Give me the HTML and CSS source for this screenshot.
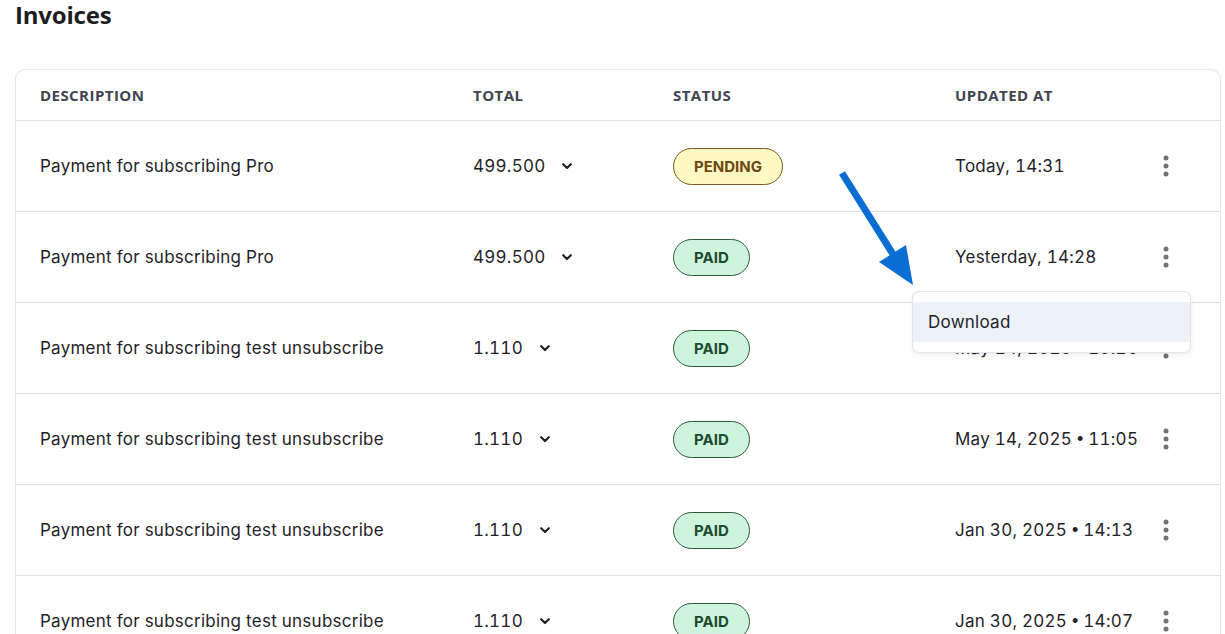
FILE: index.html
```html
<!DOCTYPE html>
<html>
<head>
<meta charset="utf-8">
<link rel="stylesheet" href="styles.css">
</head>
<body>
<div class="page">
  <h1 class="title">Invoices</h1>
  <div class="card">
    <div class="row head">
      <div class="cell">DESCRIPTION</div>
      <div class="cell">TOTAL</div>
      <div class="cell">STATUS</div>
      <div class="cell">UPDATED AT</div>
      <div class="cell"></div>
    </div>

    <div class="row">
      <div class="cell">Payment for subscribing Pro</div>
      <div class="cell total">499.500 <svg class="chev" viewBox="0 0 10 7"><polyline points="1.2,1.2 5,5 8.8,1.2"/></svg></div>
      <div class="cell"><span class="badge pending">PENDING</span></div>
      <div class="cell">Today, 14:31</div>
      <div class="cell kebab-cell"><svg class="kebab" viewBox="0 0 6 22"><circle cx="3" cy="3" r="2.5"/><circle cx="3" cy="11" r="2.5"/><circle cx="3" cy="19" r="2.5"/></svg></div>
    </div>

    <div class="row">
      <div class="cell">Payment for subscribing Pro</div>
      <div class="cell total">499.500 <svg class="chev" viewBox="0 0 10 7"><polyline points="1.2,1.2 5,5 8.8,1.2"/></svg></div>
      <div class="cell"><span class="badge paid">PAID</span></div>
      <div class="cell">Yesterday, 14:28</div>
      <div class="cell kebab-cell"><svg class="kebab" viewBox="0 0 6 22"><circle cx="3" cy="3" r="2.5"/><circle cx="3" cy="11" r="2.5"/><circle cx="3" cy="19" r="2.5"/></svg></div>
    </div>

    <div class="row">
      <div class="cell">Payment for subscribing test unsubscribe</div>
      <div class="cell total">1.110 <svg class="chev" viewBox="0 0 10 7"><polyline points="1.2,1.2 5,5 8.8,1.2"/></svg></div>
      <div class="cell"><span class="badge paid">PAID</span></div>
      <div class="cell">May 14, 2025 <span class="sep">•</span> 15:26</div>
      <div class="cell kebab-cell"><svg class="kebab" viewBox="0 0 6 22"><circle cx="3" cy="3" r="2.5"/><circle cx="3" cy="11" r="2.5"/><circle cx="3" cy="19" r="2.5"/></svg></div>
    </div>

    <div class="row">
      <div class="cell">Payment for subscribing test unsubscribe</div>
      <div class="cell total">1.110 <svg class="chev" viewBox="0 0 10 7"><polyline points="1.2,1.2 5,5 8.8,1.2"/></svg></div>
      <div class="cell"><span class="badge paid">PAID</span></div>
      <div class="cell">May 14, 2025 <span class="sep">•</span> 11:05</div>
      <div class="cell kebab-cell"><svg class="kebab" viewBox="0 0 6 22"><circle cx="3" cy="3" r="2.5"/><circle cx="3" cy="11" r="2.5"/><circle cx="3" cy="19" r="2.5"/></svg></div>
    </div>

    <div class="row">
      <div class="cell">Payment for subscribing test unsubscribe</div>
      <div class="cell total">1.110 <svg class="chev" viewBox="0 0 10 7"><polyline points="1.2,1.2 5,5 8.8,1.2"/></svg></div>
      <div class="cell"><span class="badge paid">PAID</span></div>
      <div class="cell">Jan 30, 2025 <span class="sep">•</span> 14:13</div>
      <div class="cell kebab-cell"><svg class="kebab" viewBox="0 0 6 22"><circle cx="3" cy="3" r="2.5"/><circle cx="3" cy="11" r="2.5"/><circle cx="3" cy="19" r="2.5"/></svg></div>
    </div>

    <div class="row">
      <div class="cell">Payment for subscribing test unsubscribe</div>
      <div class="cell total">1.110 <svg class="chev" viewBox="0 0 10 7"><polyline points="1.2,1.2 5,5 8.8,1.2"/></svg></div>
      <div class="cell"><span class="badge paid">PAID</span></div>
      <div class="cell">Jan 30, 2025 <span class="sep">•</span> 14:07</div>
      <div class="cell kebab-cell"><svg class="kebab" viewBox="0 0 6 22"><circle cx="3" cy="3" r="2.5"/><circle cx="3" cy="11" r="2.5"/><circle cx="3" cy="19" r="2.5"/></svg></div>
    </div>
  </div>

  <div class="menu">
    <div class="menu-item">Download</div>
  </div>

  <svg class="arrow" viewBox="0 0 1225 634" width="1225" height="634">
    <line x1="842" y1="174" x2="896" y2="260"/>
    <polygon points="913,286 879,263 906,246"/>
  </svg>
</div>
</body>
</html>
```

FILE: styles.css
```css
html, body {
  margin: 0;
  padding: 0;
  background: #ffffff;
  overflow: hidden;
}
body {
  font-family: "Inter", "Liberation Sans", sans-serif;
  color: #1f2329;
  width: 1225px;
  height: 634px;
}
.page {
  position: relative;
  padding: 0 4px 0 15px;
}
.title {
  margin: -1px 0 0 0;
  font-family: "Open Sans", sans-serif;
  font-weight: 700;
  font-size: 24px;
  line-height: 32px;
  letter-spacing: -0.2px;
  color: #1a1d21;
}
.card {
  margin-top: 38px;
  border: 1px solid #e4e6ea;
  border-radius: 10px;
  border-bottom: none;
  width: 1204px;
}
.row {
  display: grid;
  grid-template-columns: 433px 200px 282px 190px 1fr;
  padding-left: 24px;
  height: 90px;
  align-items: center;
  border-top: 1px solid #dcdfe3;
  font-size: 17px;
  letter-spacing: 0.25px;
  font-variant-numeric: tabular-nums;
}
.row.head {
  height: 50px;
  border-top: none;
  font-family: "Open Sans", sans-serif;
  font-weight: 700;
  font-size: 15px;
  letter-spacing: 0.45px;
  color: #3f4650;
}
.sep {
  font-family: "Liberation Sans", sans-serif;
  font-size: 18px;
}
.total {
  display: flex;
  align-items: center;
  gap: 17px;
}
.chev {
  width: 10px;
  height: 7px;
  fill: none;
  stroke: #1f2329;
  stroke-width: 2.2;
  stroke-linecap: round;
  stroke-linejoin: round;
}
.badge {
  display: inline-flex;
  align-items: center;
  justify-content: center;
  height: 37px;
  box-sizing: border-box;
  border-radius: 19px;
  font-weight: 700;
  font-size: 15px;
  letter-spacing: 0;
  padding: 0 20px;
  border: 1px solid;
}
.badge.pending {
  background: #fef8c3;
  border-color: #7a5a1c;
  color: #6b4a12;
}
.badge.paid {
  background: #cdf5dc;
  border-color: #2e5a3c;
  color: #1f4a30;
  padding: 0 20px;
}
.kebab-cell {
  display: flex;
  justify-content: flex-start;
  padding-left: 18px;
}
.kebab {
  width: 6px;
  height: 22px;
  fill: #737373;
}
.menu {
  position: absolute;
  left: 912px;
  top: 292px;
  width: 277px;
  padding: 10px 0;
  background: #ffffff;
  border: 1px solid #e3e5e9;
  border-radius: 7px;
  box-shadow: 0 2px 6px rgba(0, 0, 0, 0.08);
}
.menu-item {
  height: 40px;
  display: flex;
  align-items: center;
  padding-left: 15px;
  background: #edf1f8;
  font-size: 17px;
  letter-spacing: 0.25px;
  color: #1f2329;
}
.arrow {
  position: absolute;
  left: 0;
  top: 0;
  pointer-events: none;
}
.arrow line {
  stroke: #0a6dd2;
  stroke-width: 7;
}
.arrow polygon {
  fill: #0a6dd2;
}
```
